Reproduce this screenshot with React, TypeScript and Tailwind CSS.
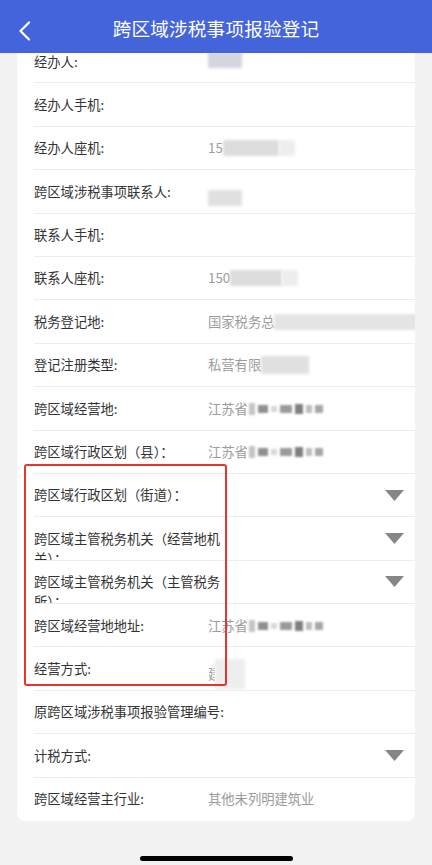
import React from 'react';

type Row = {
  label: string;
  value?: React.ReactNode;
  select?: boolean;
  wide?: boolean;
};

function Smudge({ w, h = 16, tone = 'bg-[#dcdcdc]' }: { w: number; h?: number; tone?: string }) {
  return <span className={`inline-block ${tone} blur-[1.5px]`} style={{ width: w, height: h }} />;
}

function Mosaic() {
  // pixelated blur after 江苏省
  return (
    <span className="inline-flex items-center gap-[3px] ml-[1px]">
      <span className="inline-block w-[6px] h-[12px] bg-[#c4c4c4] blur-[1px]" />
      <span className="inline-block w-[10px] h-[8px] bg-[#8f8f8f] blur-[1px]" />
      <span className="inline-block w-[6px] h-[6px] bg-[#d8d8d8] blur-[1px]" />
      <span className="inline-block w-[12px] h-[8px] bg-[#9a9a9a] blur-[1px]" />
      <span className="inline-block w-[8px] h-[10px] bg-[#7f7f7f] blur-[1px]" />
      <span className="inline-block w-[6px] h-[8px] bg-[#bdbdbd] blur-[1px]" />
      <span className="inline-block w-[8px] h-[8px] bg-[#a6a6a6] blur-[1px]" />
    </span>
  );
}

const rows: Row[] = [
  { label: '经办人:', value: <Smudge w={34} tone="bg-[#d3d6de]" /> },
  { label: '经办人手机:' },
  { label: '经办人座机:', value: <><span>15</span><Smudge w={56} /><Smudge w={16} tone="bg-[#ededed]" /></> },
  { label: '跨区域涉税事项联系人:', value: <span className="inline-block mt-[8px]"><Smudge w={34} tone="bg-[#e0e0e0]" /></span> },
  { label: '联系人手机:' },
  { label: '联系人座机:', value: <><span>150</span><Smudge w={52} /><Smudge w={16} tone="bg-[#ededed]" /></> },
  { label: '税务登记地:', value: <><span>国家税务总</span><Smudge w={146} tone="bg-[#e4e4e4]" /></> },
  { label: '登记注册类型:', value: <><span>私营有限</span><Smudge w={48} tone="bg-[#e0e0e0]" h={18} /></> },
  { label: '跨区域经营地:', value: <><span>江苏省</span><Mosaic /></> },
  { label: '跨区域行政区划（县）：', value: <><span>江苏省</span><Mosaic /></> },
  { label: '跨区域行政区划（街道）：', select: true, wide: true },
  { label: '跨区域主管税务机关（经营地机关）：', select: true, wide: true },
  { label: '跨区域主管税务机关（主管税务所）：', select: true, wide: true },
  { label: '跨区域经营地地址:', value: <><span>江苏省</span><Mosaic /></> },
  { label: '经营方式:', value: <><span className="inline-block w-[7px] overflow-hidden">建</span><Smudge w={30} h={30} tone="bg-[#eeeeee]" /></> },
  { label: '原跨区域涉税事项报验管理编号:', wide: true },
  { label: '计税方式:', select: true },
  { label: '跨区域经营主行业:', value: <span>其他未列明建筑业</span> },
];

function Caret() {
  return (
    <svg width="19" height="11" viewBox="0 0 19 11" className="shrink-0">
      <path d="M0 0 H19 L9.5 11 Z" fill="#868686" />
    </svg>
  );
}

export default function App() {
  return (
    <div
      className="w-[432px] h-[865px] overflow-hidden bg-[#f2f2f2] flex flex-col relative"
      style={{ fontFamily: '"Noto Sans CJK SC", "Noto Sans", sans-serif' }}
    >
      {/* Header */}
      <div className="relative z-10 h-[53px] shrink-0 bg-[#4464db] flex items-center justify-center">
        <svg width="14" height="20" viewBox="0 0 14 20" className="absolute left-[18px] top-[21px]">
          <path d="M11 1.5 L2.5 10 L11 18.5" stroke="#fff" strokeWidth="2.2" fill="none" strokeLinecap="round" strokeLinejoin="round" />
        </svg>
        <span className="text-white text-[18.6px] tracking-[0.2px] mt-[3px]">跨区域涉税事项报验登记</span>
      </div>

      {/* Form card */}
      <div className="-mt-[13px] mx-[17px] bg-white rounded-b-[8px] overflow-hidden">
        {rows.map((r, i) => (
          <div
            key={i}
            className={`h-[43.4px] ml-[17px] flex items-start overflow-hidden bg-white relative ${
              i < rows.length - 1 ? 'border-b border-[#ececec]' : ''
            }`}
          >
            <div
              className={`${r.wide ? 'w-[192px]' : 'w-[174px]'} shrink-0 pt-[11.5px] text-[13.3px] leading-[20px] text-[#333333]`}
            >
              {r.label}
            </div>
            {r.value && (
              <div className="pt-[11.5px] text-[13.3px] leading-[20px] text-[#9b9b9b] flex items-center whitespace-nowrap">
                {r.value}
              </div>
            )}
            {r.select && (
              <div className="ml-auto mr-[11px] self-center">
                <Caret />
              </div>
            )}
          </div>
        ))}
      </div>

      {/* Annotation box */}
      <div className="absolute left-[24px] top-[464px] w-[203px] h-[222px] border-2 border-[#e8352c] rounded-[3px] pointer-events-none" />

      {/* Home indicator */}
      <div className="mt-auto mb-[4px] mx-auto w-[153px] h-[5px] rounded-full bg-black" />
    </div>
  );
}
